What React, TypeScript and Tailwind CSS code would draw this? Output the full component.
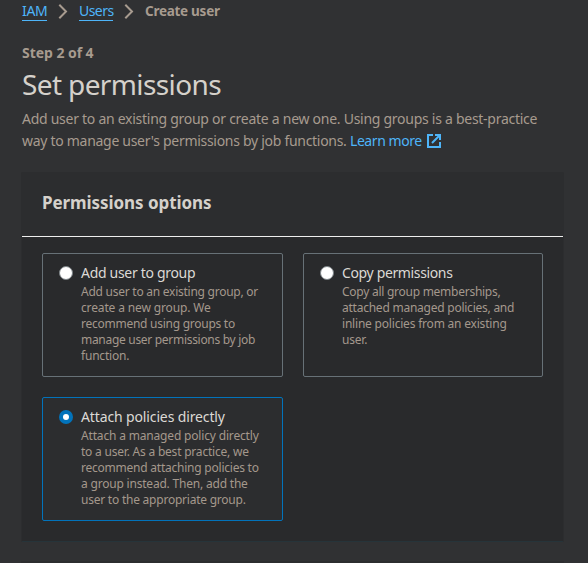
import React from "react";

type TextLine = [text: string, tracking: string];

function Chevron() {
  return (
    <svg width="10" height="16" viewBox="0 0 10 16" fill="none" className="shrink-0">
      <path d="M1.300 1.700 8 8.500l-6.700 6.800" stroke="#a79b8f" strokeWidth="2" />
    </svg>
  );
}

function ExternalIcon() {
  return (
    <svg width="14" height="14" viewBox="0 0 14 14" fill="none" stroke="#4eb5f9" strokeWidth="2" className="shrink-0">
      <path d="M6 1H1v12h12V8" />
      <path d="M8 1h5v5M12.500 1.500 5 9" />
    </svg>
  );
}

function Radio({ checked }: { checked: boolean }) {
  return checked ? (
    <span className="flex size-3.5 shrink-0 items-center justify-center rounded-full bg-[#0273bb]">
      <span className="size-1.5 rounded-full bg-white" />
    </span>
  ) : (
    <span className="size-3.5 shrink-0 rounded-full border border-[#7b8286] bg-white" />
  );
}

function Tile({ title, lines, checked = false }: { title: TextLine; lines: TextLine[]; checked?: boolean }) {
  return (
    <div
      className={
        checked
          ? "flex h-31 gap-2 rounded-[2px] border border-[#0273bb] bg-[#2c2d2f] pt-2 pl-4"
          : "flex h-31 gap-2 rounded-[2px] border border-[#677177] pt-2 pl-4"
      }
    >
      <div className="flex h-[22px] items-center">
        <Radio checked={checked} />
      </div>
      <div className="whitespace-nowrap">
        <div className={"text-[14px] leading-[22px] text-[#dcd9d5] " + title[1]}>{title[0]}</div>
        <div className="text-[12px] leading-4 text-[#a4988c]">
          {lines.map(([text, tracking]) => (
            <div key={text} className={tracking}>{text}</div>
          ))}
        </div>
      </div>
    </div>
  );
}

export default function App() {
  return (
    <main className="h-[563px] w-[588px] overflow-hidden bg-[#303133] font-['Noto_Sans',sans-serif] whitespace-nowrap">
      <div className="px-[22px]">
        <nav className="flex h-[22px] items-center text-[14px] leading-[19px] text-[#4eb5f9]">
          <a className="mr-[11px] w-[25px] border-b border-[#4eb5f9] tracking-[-0.3px]">IAM</a>
          <Chevron />
          <a className="mx-[11px] w-[34px] border-b border-[#4eb5f9] tracking-[-0.55px]">Users</a>
          <Chevron />
          <span className="ml-[11px] pt-px text-[13.5px] font-bold tracking-[-0.27px] text-[#a79b8f]">Create user</span>
        </nav>
        <div className="mt-5 text-[14px] leading-[22px] font-bold tracking-[-0.05px] text-[#a79b8f]">Step 2 of 4</div>
        <h1 className="h-[44px] text-[28px] leading-[40px] tracking-[-0.62px] text-[#d5d1cb]">Set permissions</h1>
        <div className="text-[14px] leading-[22px] text-[#a79b8f]">
          <p className="tracking-[-0.27px]">Add user to an existing group or create a new one. Using groups is a best-practice</p>
          <p className="flex items-center">
            <span className="w-[328px] tracking-[-0.29px]">way to manage user's permissions by job functions.</span>
            <a className="flex items-center text-[#4eb5f9]">
              <span className="w-[77px] tracking-[-0.43px]">Learn more</span>
              <ExternalIcon />
            </a>
          </p>
        </div>
      </div>
      <section className="mt-5 ml-[21px] h-[370px] w-[543px] rounded-[2px] border-x border-b border-x-[#2c2d2f] border-b-[#26343a] bg-[#292a2c]">
        <h2 className="h-[65px] border-b border-[#eeeeee] bg-[#2c2d2f] pt-[18px] pl-5 text-[17px] leading-[26px] font-bold tracking-[-0.07px] text-[#d5d1cb]">
          Permissions options
        </h2>
        <div className="grid grid-cols-[241px_240px] gap-5 px-5 pt-4">
          <Tile
            title={["Add user to group", "tracking-[-0.31px]"]}
            lines={[
              ["Add user to an existing group, or", "tracking-[-0.25px]"],
              ["create a new group. We", "tracking-[-0.14px]"],
              ["recommend using groups to", "tracking-[-0.26px]"],
              ["manage user permissions by job", "tracking-[-0.3px]"],
              ["function.", "tracking-[-0.2px]"],
            ]}
          />
          <Tile
            title={["Copy permissions", "tracking-[-0.36px]"]}
            lines={[
              ["Copy all group memberships,", "tracking-[-0.26px]"],
              ["attached managed policies, and", "tracking-[-0.24px]"],
              ["inline policies from an existing", "tracking-[-0.2px]"],
              ["user.", "tracking-[-0.2px]"],
            ]}
          />
          <Tile
            checked
            title={["Attach policies directly", "tracking-[-0.13px]"]}
            lines={[
              ["Attach a managed policy directly", "tracking-[-0.17px]"],
              ["to a user. As a best practice, we", "tracking-[-0.21px]"],
              ["recommend attaching policies to", "tracking-[-0.23px]"],
              ["a group instead. Then, add the", "tracking-[-0.2px]"],
              ["user to the appropriate group.", "tracking-[-0.23px]"],
            ]}
          />
        </div>
      </section>
      <div className="mt-[19px] ml-[21px] h-2 w-[543px] bg-[#2c2d2f]" />
    </main>
  );
}
